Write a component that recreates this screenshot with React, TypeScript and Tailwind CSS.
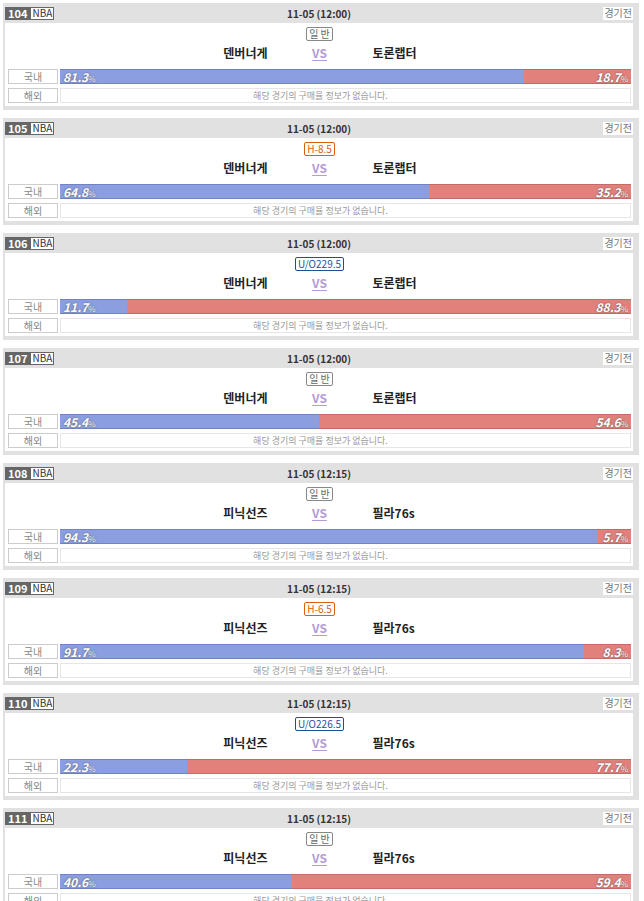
import React from 'react';

interface Game {
  no: number;
  time: string;
  handicap: string;
  kind: 'normal' | 'handi' | 'uo';
  home: string;
  away: string;
  homePct: number;
  awayPct: number;
}

const games: Game[] = [
  { no: 104, time: '11-05 (12:00)', handicap: '일 반', kind: 'normal', home: '덴버너게', away: '토론랩터', homePct: 81.3, awayPct: 18.7 },
  { no: 105, time: '11-05 (12:00)', handicap: 'H-8.5', kind: 'handi', home: '덴버너게', away: '토론랩터', homePct: 64.8, awayPct: 35.2 },
  { no: 106, time: '11-05 (12:00)', handicap: 'U/O229.5', kind: 'uo', home: '덴버너게', away: '토론랩터', homePct: 11.7, awayPct: 88.3 },
  { no: 107, time: '11-05 (12:00)', handicap: '일 반', kind: 'normal', home: '덴버너게', away: '토론랩터', homePct: 45.4, awayPct: 54.6 },
  { no: 108, time: '11-05 (12:15)', handicap: '일 반', kind: 'normal', home: '피닉선즈', away: '필라76s', homePct: 94.3, awayPct: 5.7 },
  { no: 109, time: '11-05 (12:15)', handicap: 'H-6.5', kind: 'handi', home: '피닉선즈', away: '필라76s', homePct: 91.7, awayPct: 8.3 },
  { no: 110, time: '11-05 (12:15)', handicap: 'U/O226.5', kind: 'uo', home: '피닉선즈', away: '필라76s', homePct: 22.3, awayPct: 77.7 },
  { no: 111, time: '11-05 (12:15)', handicap: '일 반', kind: 'normal', home: '피닉선즈', away: '필라76s', homePct: 40.6, awayPct: 59.4 },
];

const badgeStyle: Record<Game['kind'], string> = {
  normal: 'border-[#888] text-[#666]',
  handi: 'border-[#d9600f] text-[#d9600f]',
  uo: 'border-[#1f4f9a] text-[#1f4f9a]',
};

const Pct = ({ value }: { value: number }) => (
  <span className="text-[12px] font-bold italic text-white [text-shadow:0_0_2px_#555]">
    {value.toFixed(1)}
    <span className="text-[8px] not-italic font-normal text-[#eee]">%</span>
  </span>
);

const GameCard = ({ game }: { game: Game }) => (
  <div className="ml-[3px] w-[636px] bg-[#e1e1e1] pl-[2px] pr-[6px] pb-[4px]">
    {/* header */}
    <div className="grid h-[20px] grid-cols-[1fr_auto_1fr] items-center">
      <div className="flex items-center">
        <span className="flex h-[13px] items-center bg-[#666] px-[3px] text-[11px] font-bold leading-none text-white">
          {game.no}
        </span>
        <span className="flex h-[13px] items-center border border-[#666] bg-white px-[1px] text-[10px] leading-none text-[#333]">
          NBA
        </span>
      </div>
      <div className="text-[10px] font-bold text-[#333]">{game.time}</div>
      <div className="flex justify-end">
        <span className="flex h-[13px] items-center bg-white px-[1px] text-[10px] leading-none text-[#777]">경기전</span>
      </div>
    </div>

    {/* body */}
    <div className="bg-white px-[3px] pt-[4px] pb-[3px] pr-[2px]">
      <div className="flex justify-center">
        <span
          className={`flex h-[14px] items-center rounded-[2px] border px-[2px] text-[10px] leading-none ${badgeStyle[game.kind]}`}
        >
          {game.handicap}
        </span>
      </div>
      <div className="mt-[1px] grid h-[22px] grid-cols-[1fr_50px_1fr] items-center">
        <div className="flex justify-end pr-[27px] text-[12px] font-bold text-[#222]">{game.home}</div>
        <div className="text-center text-[12px] font-bold text-[#b49ad6] underline underline-offset-2">VS</div>
        <div className="pl-[28px] text-[12px] font-bold text-[#222]">{game.away}</div>
      </div>

      <div className="mt-[5px] flex h-[15px] gap-[2px]">
        <div className="flex w-[50px] shrink-0 items-center justify-center border border-[#ccc] text-[10px] text-[#888]">
          국내
        </div>
        <div className="flex flex-1">
          <div
            className="flex items-center border-y border-[#7183c4] bg-[#8b9ee0] pl-[3px]"
            style={{ width: `${game.homePct}%` }}
          >
            <Pct value={game.homePct} />
          </div>
          <div className="flex flex-1 items-center justify-end border-y border-[#c56a67] bg-[#e2817c] pr-[3px]">
            <Pct value={game.awayPct} />
          </div>
        </div>
      </div>

      <div className="mt-[4px] flex h-[15px] gap-[2px]">
        <div className="flex w-[50px] shrink-0 items-center justify-center border border-[#ccc] text-[10px] text-[#888]">
          해외
        </div>
        <div className="flex flex-1 items-center justify-center border border-[#e6e6e6] pr-[50px] text-[9px] text-[#999]">
          해당 경기의 구매율 정보가 없습니다.
        </div>
      </div>
    </div>
  </div>
);

const App: React.FC = () => {
  return (
    <div
      className="flex flex-col gap-[8px] bg-white pt-[3px]"
      style={{ fontFamily: '"Noto Sans CJK KR", "Noto Sans", sans-serif' }}
    >
      {games.map((g) => (
        <GameCard key={g.no} game={g} />
      ))}
    </div>
  );
};

export default App;
